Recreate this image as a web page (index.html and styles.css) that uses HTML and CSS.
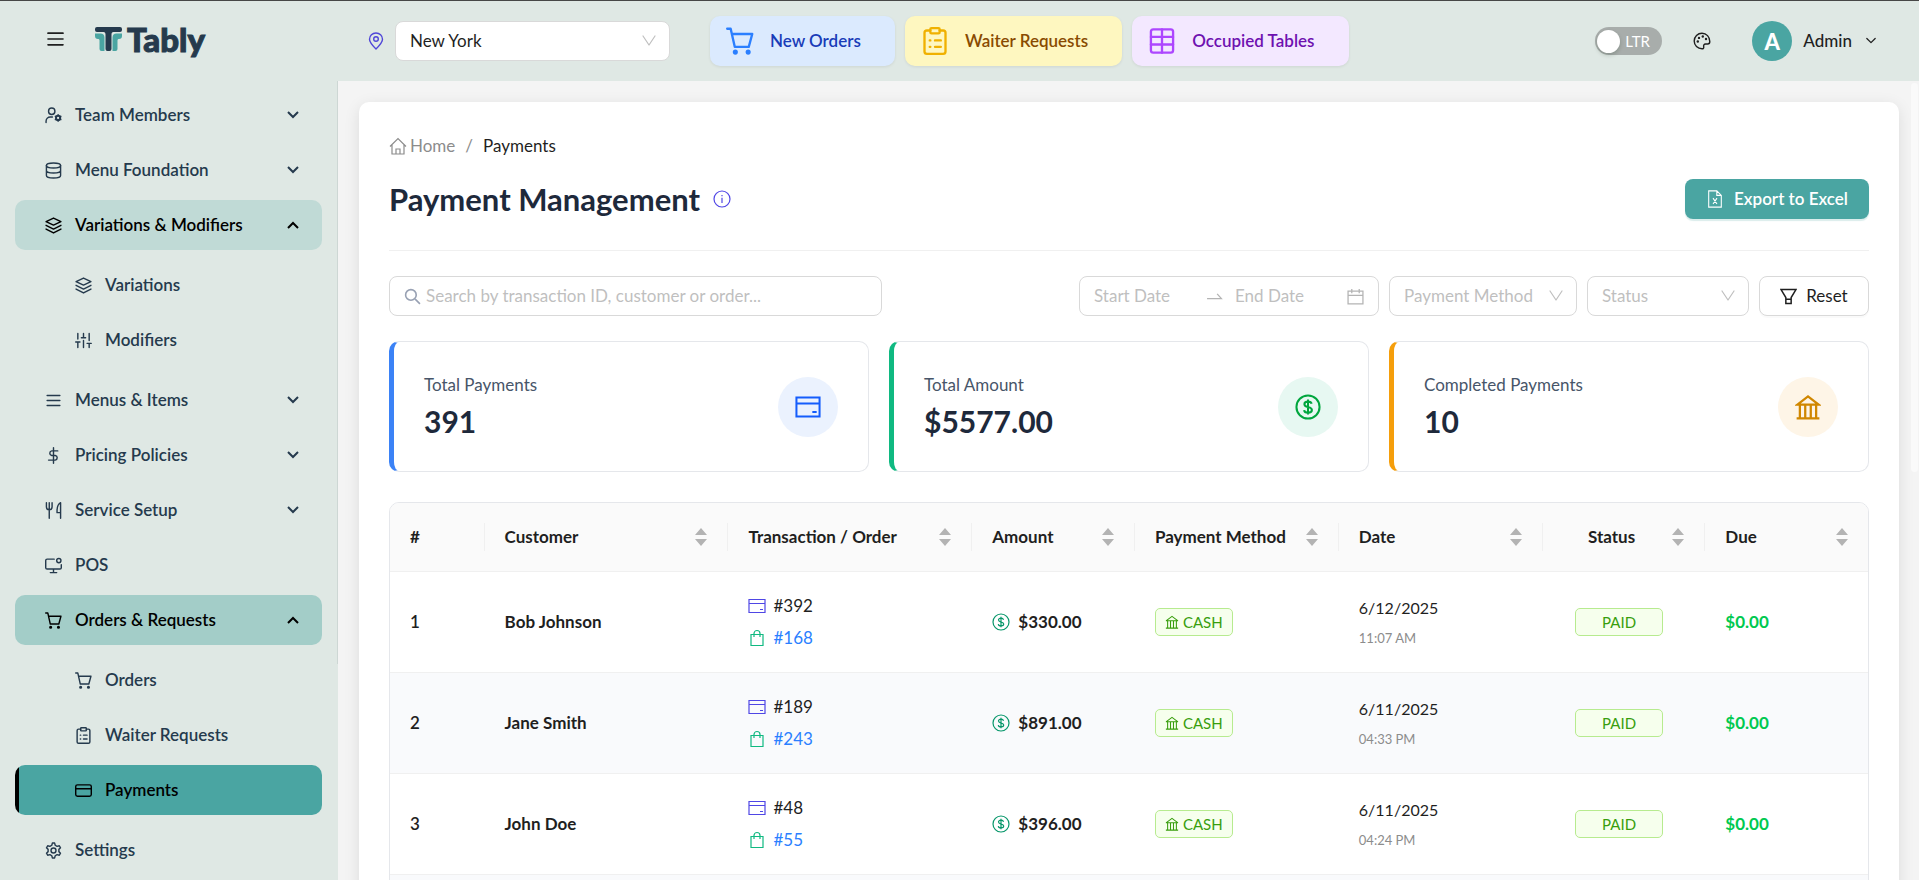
FILE: index.html
```html
<!DOCTYPE html>
<html lang="en" dir="ltr">
<head>
<meta charset="utf-8">
<meta name="viewport" content="width=device-width, initial-scale=1">
<title>Payment Management - Tably</title>
<link rel="stylesheet" href="styles.css">
</head>
<body>
<svg class="sprite" aria-hidden="true">
  <symbol id="user-cog" viewBox="0 0 24 24"><circle cx="9.500" cy="6" r="4.500"/><path d="M1.500 22v-2a6 6 0 0 1 6-6h3"/><circle cx="18.500" cy="15.500" r="3" stroke-width="2.800"/><path d="M18.500 11v1.500M18.500 18.500V20M22.400 13.200l-1.300.8M15.900 17l-1.300.8M14.600 13.200l1.300.8M21.100 17l1.300.8"/></symbol>
  <symbol id="database" viewBox="0 0 24 24"><ellipse cx="12" cy="5" rx="10" ry="3.500"/><path d="M2 5v14c0 2 4 3.500 10 3.500s10-1.500 10-3.500V5M2 12c0 2 4 3.500 10 3.500s10-1.500 10-3.500"/></symbol>
  <symbol id="layers" viewBox="0 0 24 24"><path d="M12 1.500L1.500 6.500 12 11.500l10.500-5zM1.500 11.800L12 17l10.500-5.200M1.500 17L12 22.500 22.500 17"/></symbol>
  <symbol id="sliders" viewBox="0 0 24 24"><path d="M4 22v-8M4 10V2M12 22V12M12 8V2M20 22v-6M20 12V2M1 14h6M9 8h6M17 16h6"/></symbol>
  <symbol id="menu" viewBox="0 0 24 24"><path d="M3 5h18M3 12h18M3 19h18"/></symbol>
  <symbol id="dollar" viewBox="0 0 24 24"><path d="M12 1v22M18 5.500H9.500a3.300 3.300 0 0 0 0 6.500h5a3.300 3.300 0 0 1 0 6.500H5"/></symbol>
  <symbol id="utensils" viewBox="0 0 24 24"><path d="M2 1v6a4 4 0 0 0 8 0V1M6 1v22M22 23V1c-4 2-5 6-5 12v2h5"/></symbol>
  <symbol id="monitor" viewBox="0 0 24 24"><path d="M13 3H3a2 2 0 0 0-2 2v10a2 2 0 0 0 2 2h18a2 2 0 0 0 2-2v-4M7.500 22h9M12 17v5"/><circle cx="19.500" cy="5" r="3"/></symbol>
  <symbol id="cart" viewBox="0 0 24 24"><path d="M1 1.500h3L7.500 17H19.500L22.500 6H5"/><circle cx="8" cy="21.500" r="1.200" fill="currentColor"/><circle cx="19" cy="21.500" r="1.200" fill="currentColor"/></symbol>
  <symbol id="clipboard" viewBox="0 0 24 24"><path d="M8 3H5a2 2 0 0 0-2 2v16a2 2 0 0 0 2 2h14a2 2 0 0 0 2-2V5a2 2 0 0 0-2-2h-3"/><rect x="8" y="1" width="8" height="4.500" rx="1"/><path d="M12 11.500h5M12 17h5M7.500 11.500h.5M7.500 17h.5"/></symbol>
  <symbol id="card-round" viewBox="0 0 24 24"><rect x="1" y="4" width="22" height="16" rx="2.500"/><path d="M1 9.500h22"/></symbol>
  <symbol id="gear" viewBox="0 0 24 24"><circle cx="12" cy="12" r="3.500"/><path d="M9.600 4.600L10.400 1.500h3.200l.8 3.100 2.700 1.600 3.100-.9 1.700 2.900-2.300 2.200v3.200l2.300 2.200-1.700 2.900-3.100-.9-2.700 1.600-.8 3.100h-3.200l-.8-3.100-2.700-1.600-3.100.9-1.700-2.900 2.300-2.200v-3.200L2.100 8.200l1.700-2.900 3.100.9z"/></symbol>
  <symbol id="grid" viewBox="0 0 24 24"><rect x="2.500" y="2" width="19" height="20" rx="2"/><path d="M12 2v20M2.500 8.500h19M2.500 15h19"/></symbol>
  <symbol id="down" viewBox="0 0 12 12"><path d="M1 3l5 5 5-5"/></symbol>
  <symbol id="up" viewBox="0 0 12 12"><path d="M1 9l5-5 5 5"/></symbol>
  <symbol id="vee" viewBox="0 0 14 14"><path d="M1 2l6 9 6-9"/></symbol>
  <symbol id="pin" viewBox="0 0 16 18"><path d="M8 17C4 13 1.500 10 1.500 7.200a6.500 6.200 0 0 1 13 0C14.500 10 12 13 8 17z"/><circle cx="8" cy="7" r="2.300"/></symbol>
  <symbol id="palette" viewBox="0 0 18 18"><path d="M9 1.200a7.800 7.800 0 1 0 0 15.600c1.400 0 2-.9 1.700-2-.4-1.500.3-2.800 1.900-2.800h2.100c1.300 0 2.100-1 2.100-2.500C16.800 4.900 13.400 1.200 9 1.200z"/><g fill="currentColor" stroke="none"><circle cx="4.800" cy="9.500" r="1.200"/><circle cx="6" cy="5.900" r="1.200"/><circle cx="9.800" cy="4.500" r="1.200"/><circle cx="13" cy="7" r="1.200"/></g></symbol>
  <symbol id="home" viewBox="0 0 18 18"><path d="M1 9.500L9 1.500l8 8M3 8v9h12V8M7 17v-5h4v5"/></symbol>
  <symbol id="info" viewBox="0 0 18 18"><circle cx="9" cy="9" r="8"/><path d="M9 7.800v5.200M9 5v1.200"/></symbol>
  <symbol id="excel" viewBox="0 0 16 20"><path d="M10 1H1v18h14V6zM10 1v5h5M5.800 9l4.400 6.500M10.200 9l-4.400 6.500"/></symbol>
  <symbol id="search" viewBox="0 0 16 16"><circle cx="6.500" cy="6.500" r="5"/><path d="M10.500 10.500L15 15"/></symbol>
  <symbol id="arrow" viewBox="0 0 16 16"><path d="M1 10h13.500L10.500 5.500"/></symbol>
  <symbol id="calendar" viewBox="0 0 16 16"><path d="M1 3h14v12H1zM1 7h14M4.500 1v4M11.500 1v4"/></symbol>
  <symbol id="filter" viewBox="0 0 16 16"><path d="M1 1.500h14L10.500 9v5.500h-5V9zM5.500 10.500h5"/></symbol>
  <symbol id="card" viewBox="0 0 18 16"><path d="M1 1.500h16v13H1zM1 5.500h16M12 11.500h3"/></symbol>
  <symbol id="bag" viewBox="0 0 16 18"><path d="M2 5.500h12v11H2zM5 8V4.500a3 3 0 0 1 6 0V8"/></symbol>
  <symbol id="coin" viewBox="0 0 18 18"><circle cx="9" cy="9" r="8"/><path d="M9 3.800v10.400M11.500 6.800c-.2-1-1.100-1.600-2.500-1.600s-2.500.7-2.500 1.900c0 2.800 5.200 1.200 5.200 3.900 0 1.100-1 1.900-2.700 1.900s-2.600-.8-2.700-1.800"/></symbol>
  <symbol id="bank" viewBox="0 0 16 16"><path d="M1 15h14M1.500 6.500L8 1.500l6.500 5zM3 6.500V15M6.300 6.500V15M9.700 6.500V15M13 6.500V15"/></symbol>
  <symbol id="sorter" viewBox="0 0 12 18"><path d="M6 0l6 7H0zM0 11h12l-6 7z" fill="currentColor" stroke="none"/></symbol>
</svg>

<header class="topbar">
  <div class="brand">
    <button class="plain" type="button" aria-label="Toggle menu"><svg class="icon burger"><use href="#menu"/></svg></button>
    <a class="logo" href="#">
      <svg class="logo-mark" viewBox="0 0 27 25" aria-hidden="true"><path fill="#253a4d" d="M2 0h23a2 2 0 0 1 2 2v1a2 2 0 0 1-2 2h-6.500c-1.500 0-2 1-2 2.500V22a2 2 0 0 1-2 2h-2a2 2 0 0 1-2-2V7.500c0-1.500-.5-2.500-2-2.500H2a2 2 0 0 1-2-2V2a2 2 0 0 1 2-2z"/><path fill="#4aa5a2" d="M0 6.500h5.500c2.500 0 4 1.500 4 4V24H6.500a2 2 0 0 1-2-2V13.500c0-1-.5-1.500-1.500-1.500A3 3 0 0 1 0 9zM27 6.500h-5.500c-2.500 0-4 1.500-4 4V24h3a2 2 0 0 0 2-2V13.500c0-1 .5-1.500 1.500-1.500a3 3 0 0 0 3-3z"/></svg>
      <span>Tably</span>
    </a>
  </div>
  <div class="branch">
    <svg class="icon pin"><use href="#pin"/></svg>
    <div class="select branch-select">
      <select aria-label="Branch"><option>New York</option></select>
      <svg class="icon vee"><use href="#vee"/></svg>
    </div>
  </div>
  <nav class="quick" aria-label="Quick links">
    <a class="chip blue" href="#"><svg class="icon big"><use href="#cart"/></svg>New Orders</a>
    <a class="chip yellow" href="#"><svg class="icon big"><use href="#clipboard"/></svg>Waiter Requests</a>
    <a class="chip purple" href="#"><svg class="icon big"><use href="#grid"/></svg>Occupied Tables</a>
  </nav>
  <div class="account">
    <button class="switch" type="button" role="switch" aria-checked="false"><span class="knob"></span>LTR</button>
    <button class="plain" type="button" aria-label="Theme"><svg class="icon palette"><use href="#palette"/></svg></button>
    <button class="plain user" type="button"><span class="avatar">A</span>Admin<svg class="icon tiny"><use href="#down"/></svg></button>
  </div>
</header>

<div class="shell">
  <nav class="sidebar" aria-label="Main">
    <a class="item" href="#"><svg class="icon"><use href="#user-cog"/></svg><span>Team Members</span><svg class="icon caret"><use href="#down"/></svg></a>
    <a class="item" href="#"><svg class="icon"><use href="#database"/></svg><span>Menu Foundation</span><svg class="icon caret"><use href="#down"/></svg></a>
    <a class="item open" href="#"><svg class="icon"><use href="#layers"/></svg><span>Variations &amp; Modifiers</span><svg class="icon caret"><use href="#up"/></svg></a>
    <div class="sub">
      <a class="item" href="#"><svg class="icon"><use href="#layers"/></svg><span>Variations</span></a>
      <a class="item" href="#"><svg class="icon"><use href="#sliders"/></svg><span>Modifiers</span></a>
    </div>
    <a class="item" href="#"><svg class="icon"><use href="#menu"/></svg><span>Menus &amp; Items</span><svg class="icon caret"><use href="#down"/></svg></a>
    <a class="item" href="#"><svg class="icon"><use href="#dollar"/></svg><span>Pricing Policies</span><svg class="icon caret"><use href="#down"/></svg></a>
    <a class="item" href="#"><svg class="icon"><use href="#utensils"/></svg><span>Service Setup</span><svg class="icon caret"><use href="#down"/></svg></a>
    <a class="item" href="#"><svg class="icon"><use href="#monitor"/></svg><span>POS</span></a>
    <a class="item open current" href="#"><svg class="icon"><use href="#cart"/></svg><span>Orders &amp; Requests</span><svg class="icon caret"><use href="#up"/></svg></a>
    <div class="sub">
      <a class="item" href="#"><svg class="icon"><use href="#cart"/></svg><span>Orders</span></a>
      <a class="item" href="#"><svg class="icon"><use href="#clipboard"/></svg><span>Waiter Requests</span></a>
      <a class="item selected" href="#" aria-current="page"><svg class="icon"><use href="#card-round"/></svg><span>Payments</span></a>
    </div>
    <a class="item" href="#"><svg class="icon"><use href="#gear"/></svg><span>Settings</span></a>
    <span class="side-thumb"></span>
  </nav>

  <main class="page">
    <span class="page-thumb"></span>
    <div class="panel">
      <nav class="crumbs" aria-label="Breadcrumb">
        <a href="#"><svg class="icon med"><use href="#home"/></svg>Home</a><span>/</span><span class="here">Payments</span>
      </nav>
      <div class="heading">
        <h1>Payment Management</h1>
        <svg class="icon med info"><use href="#info"/></svg>
        <button class="export" type="button"><svg class="icon med"><use href="#excel"/></svg>Export to Excel</button>
      </div>

      <form class="filters">
        <label class="field search"><svg class="icon"><use href="#search"/></svg><input type="text" aria-label="Search" placeholder="Search by transaction ID, customer or order..."></label>
        <div class="field range">
          <input type="text" aria-label="Start date" placeholder="Start Date">
          <svg class="icon"><use href="#arrow"/></svg>
          <input type="text" aria-label="End date" placeholder="End Date">
          <svg class="icon"><use href="#calendar"/></svg>
        </div>
        <div class="select method"><select aria-label="Payment method"><option>Payment Method</option></select><svg class="icon vee"><use href="#vee"/></svg></div>
        <div class="select status"><select aria-label="Status"><option>Status</option></select><svg class="icon vee"><use href="#vee"/></svg></div>
        <button class="reset" type="reset"><svg class="icon"><use href="#filter"/></svg>Reset</button>
      </form>

      <section class="stats">
        <article class="stat s-blue"><div><p>Total Payments</p><strong>391</strong></div><span class="disc"><svg class="icon mid"><use href="#card"/></svg></span></article>
        <article class="stat s-green"><div><p>Total Amount</p><strong>$5577.00</strong></div><span class="disc"><svg class="icon mid"><use href="#coin"/></svg></span></article>
        <article class="stat s-amber"><div><p>Completed Payments</p><strong>10</strong></div><span class="disc"><svg class="icon mid"><use href="#bank"/></svg></span></article>
      </section>

      <div class="table-box">
        <table>
          <colgroup><col class="c-num"><col class="c-wide"><col class="c-wide"><col class="c-slim"><col class="c-mid"><col class="c-mid"><col class="c-slim"><col class="c-slim"></colgroup>
          <thead>
            <tr>
              <th scope="col"><div class="th"><span>#</span></div></th>
              <th scope="col"><div class="th"><span>Customer</span><svg class="icon sorter"><use href="#sorter"/></svg></div></th>
              <th scope="col"><div class="th"><span>Transaction / Order</span><svg class="icon sorter"><use href="#sorter"/></svg></div></th>
              <th scope="col"><div class="th"><span>Amount</span><svg class="icon sorter"><use href="#sorter"/></svg></div></th>
              <th scope="col"><div class="th"><span>Payment Method</span><svg class="icon sorter"><use href="#sorter"/></svg></div></th>
              <th scope="col"><div class="th"><span>Date</span><svg class="icon sorter"><use href="#sorter"/></svg></div></th>
              <th scope="col"><div class="th mid-text"><span>Status</span><svg class="icon sorter"><use href="#sorter"/></svg></div></th>
              <th scope="col"><div class="th"><span>Due</span><svg class="icon sorter"><use href="#sorter"/></svg></div></th>
            </tr>
          </thead>
          <tbody>
            <tr>
              <td class="num">1</td><td class="name">Bob Johnson</td>
              <td><div class="ref"><svg class="icon med indigo"><use href="#card"/></svg>#392</div><div class="ref"><svg class="icon med emerald"><use href="#bag"/></svg><a href="#">#168</a></div></td>
              <td><div class="amount"><svg class="icon med teal"><use href="#coin"/></svg>$330.00</div></td>
              <td><span class="tag"><svg class="icon small"><use href="#bank"/></svg>CASH</span></td>
              <td><div class="day">6/12/2025</div><div class="time">11:07 AM</div></td>
              <td class="center"><span class="tag paid">PAID</span></td><td class="due">$0.00</td>
            </tr>
            <tr>
              <td class="num">2</td><td class="name">Jane Smith</td>
              <td><div class="ref"><svg class="icon med indigo"><use href="#card"/></svg>#189</div><div class="ref"><svg class="icon med emerald"><use href="#bag"/></svg><a href="#">#243</a></div></td>
              <td><div class="amount"><svg class="icon med teal"><use href="#coin"/></svg>$891.00</div></td>
              <td><span class="tag"><svg class="icon small"><use href="#bank"/></svg>CASH</span></td>
              <td><div class="day">6/11/2025</div><div class="time">04:33 PM</div></td>
              <td class="center"><span class="tag paid">PAID</span></td><td class="due">$0.00</td>
            </tr>
            <tr>
              <td class="num">3</td><td class="name">John Doe</td>
              <td><div class="ref"><svg class="icon med indigo"><use href="#card"/></svg>#48</div><div class="ref"><svg class="icon med emerald"><use href="#bag"/></svg><a href="#">#55</a></div></td>
              <td><div class="amount"><svg class="icon med teal"><use href="#coin"/></svg>$396.00</div></td>
              <td><span class="tag"><svg class="icon small"><use href="#bank"/></svg>CASH</span></td>
              <td><div class="day">6/11/2025</div><div class="time">04:24 PM</div></td>
              <td class="center"><span class="tag paid">PAID</span></td><td class="due">$0.00</td>
            </tr>
            <tr class="next"><td colspan="8"></td></tr>
          </tbody>
        </table>
      </div>
    </div>
  </main>
</div>
</body>
</html>
```
FILE: styles.css
```css
:root {
  --mist: #dfe8e4;
  --teal: #4aa5a2;
  --ink: #253a4d;
  --line: #d9d9d9;
  --faint: #bfbfbf;
}

* { box-sizing: border-box; }

body {
  margin: 0;
  height: 100vh;
  display: flex;
  flex-direction: column;
  overflow: hidden;
  font: 17px/24px Lato, "Open Sans", sans-serif;
  color: #1f1f1f;
  background: #f4f4f4;
}

a { color: inherit; text-decoration: none; }
button, input, select { font: inherit; color: inherit; }
.sprite { position: absolute; width: 0; height: 0; }

.icon {
  width: 17px;
  height: 17px;
  flex: none;
  fill: none;
  stroke: currentColor;
  stroke-width: 2;
  stroke-linecap: round;
  stroke-linejoin: round;
}
.icon.med { width: 18px; height: 18px; stroke-width: 1.2; stroke-linecap: butt; stroke-linejoin: miter; }
.icon.big { width: 30px; height: 28px; }
.icon.mid { width: 26px; height: 26px; stroke-width: 1.4; stroke-linecap: butt; stroke-linejoin: miter; }
.icon.small { width: 14px; height: 14px; stroke-width: 1.2; stroke-linecap: butt; }
.icon.tiny { width: 10px; height: 10px; stroke-width: 1.5; }
.plain { border: 0; padding: 0; background: none; display: flex; align-items: center; cursor: pointer; }

/* Top bar */
.topbar {
  height: 81px;
  flex: none;
  display: flex;
  align-items: center;
  border-top: 1px solid #474747;
  background: var(--mist);
}
.brand { width: 338px; flex: none; display: flex; align-items: center; gap: 29px; padding: 0 0 4px 45px; }
.icon.burger { width: 21px; height: 20px; }
.logo { display: flex; align-items: center; gap: 5px; color: var(--ink); font-size: 33px; line-height: 40px; font-weight: 900; -webkit-text-stroke: 1px var(--ink); }
.logo-mark { width: 27px; height: 25px; }
.branch { display: flex; align-items: center; gap: 11px; margin-left: 30px; }
.icon.pin { width: 16px; height: 18px; stroke-width: 1.4; color: #5046d8; }
.select { display: flex; align-items: center; position: relative; }
.select select {
  appearance: none;
  width: 100%;
  height: 40px;
  padding: 0 34px 0 14px;
  border: 1px solid var(--line);
  border-radius: 8px;
  background: #fff;
}
.icon.vee { position: absolute; right: 14px; width: 14px; height: 14px; stroke-width: 1.2; color: var(--faint); pointer-events: none; }
.branch-select { width: 275px; }
.quick { display: flex; gap: 10px; margin-left: 40px; }
.chip {
  height: 50px;
  display: flex;
  align-items: center;
  gap: 15px;
  padding: 0 34px 0 15px;
  border-radius: 10px;
  font-weight: 600;
  box-shadow: 0 1px 3px rgba(0, 0, 0, .08);
  white-space: nowrap;
}
.blue { background: #dbeafe; color: #193cb8; }
.blue .icon { color: #2b7fff; }
.yellow { background: #fef7c0; color: #894b00; }
.yellow .icon { color: #f0b100; }
.purple { background: #f3e8ff; color: #6e11b0; }
.purple .icon { color: #ad46ff; }
.account { margin-left: auto; padding-right: 43px; display: flex; align-items: center; }
.switch {
  width: 67px;
  height: 28px;
  display: flex;
  align-items: center;
  gap: 5px;
  padding: 0 2px;
  border: 0;
  border-radius: 14px;
  background: #a8adab;
  color: #fff;
  font-size: 15px;
}
.knob { width: 23px; height: 23px; flex: none; border-radius: 50%; background: #fff; box-shadow: 0 2px 4px rgba(0, 35, 11, .2); }
.icon.palette { width: 18px; height: 18px; margin: 0 41px 0 31px; stroke-width: 1.4; }
.user { gap: 11px; font-weight: 500; }
.user .tiny { margin-left: 3px; }
.avatar { width: 40px; height: 40px; border-radius: 50%; background: var(--teal); color: #fff; font-size: 22px; line-height: 42px; font-weight: 900; text-align: center; }

/* Sidebar */
.shell { flex: 1; min-height: 0; display: flex; }
.sidebar {
  position: relative;
  width: 338px;
  flex: none;
  display: flex;
  flex-direction: column;
  gap: 5px;
  padding: 9px 16px 0 15px;
  overflow: hidden;
  background: var(--mist);
  color: var(--ink);
}
.item {
  height: 50px;
  flex: none;
  display: flex;
  align-items: center;
  gap: 13px;
  padding: 0 23px 0 30px;
  border-radius: 10px;
  font-weight: 600;
}
.item span { flex: 1; }
.item .caret { width: 12px; height: 12px; stroke-linecap: butt; stroke-linejoin: miter; }
.sub { display: flex; flex-direction: column; gap: 5px; margin: 5px 0; }
.sub .item { padding-left: 60px; }
.item.open { background: #c0dad6; color: #000; }
.item.current { background: #a3cdc8; }
.item.selected { background: linear-gradient(to right, #000 4px, var(--teal) 4px); color: #000; }
.side-thumb { position: absolute; top: 0; right: 0; width: 1px; height: 583px; background: #cdd7d4; }

/* Page */
.page { position: relative; flex: 1; min-width: 0; overflow: hidden; padding: 21px 20px 0 21px; }
.page-thumb { position: absolute; top: 2px; right: 1px; width: 7px; height: 389px; border-radius: 4px; background: #fafafa; }
.panel {
  min-height: 900px;
  padding: 32px 30px;
  border-radius: 10px;
  background: #fff;
  box-shadow: 0 4px 16px rgba(0, 0, 0, .1);
}
.crumbs { display: flex; gap: 10px; color: #8c8c8c; }
.crumbs a { display: flex; align-items: center; gap: 3px; }
.crumbs .here { color: #1f1f1f; }
.heading { display: flex; align-items: center; gap: 13px; padding: 21px 0 31px; border-bottom: 1px solid #f0f0f0; }
h1 { margin: 0; font-size: 31px; line-height: 40px; font-weight: 700; color: #1e293b; }
.info { color: #5046e5; }
.export, .reset {
  height: 40px;
  display: flex;
  align-items: center;
  justify-content: center;
  border-radius: 8px;
  cursor: pointer;
}
.export { width: 184px; gap: 10px; margin-left: auto; border: 0; background: var(--teal); color: #fff; font-weight: 600; box-shadow: 0 2px 1px rgba(74, 165, 162, .2); }

.filters { display: flex; align-items: center; gap: 10px; margin-top: 25px; }
.field { height: 40px; display: flex; align-items: center; border: 1px solid var(--line); border-radius: 8px; background: #fff; color: #1f1f1f; }
.field input { width: 100%; min-width: 0; border: 0; outline: 0; padding: 0; background: none; }
.field input::placeholder { color: var(--faint); opacity: 1; }
.field .icon { stroke-width: 1.2; stroke-linecap: butt; stroke-linejoin: miter; color: #b4b4b4; }
.search { flex: 0 1 493px; margin-right: auto; gap: 5px; padding: 0 14px; }
.field.search .icon { color: #98a1b3; stroke-width: 1.5; }
.range { width: 300px; gap: 12px; padding: 0 14px; }
.filters .select select { color: var(--faint); }
.method { width: 188px; }
.status { width: 162px; }
.reset { width: 110px; gap: 9px; border: 1px solid var(--line); background: #fff; box-shadow: 0 2px 0 rgba(0, 0, 0, .02); }
.reset .icon { stroke-width: 1.4; stroke-linecap: butt; stroke-linejoin: miter; }

.stats { display: grid; grid-template-columns: repeat(3, 1fr); gap: 20px; margin-top: 25px; }
.stat {
  height: 131px;
  display: flex;
  align-items: center;
  justify-content: space-between;
  padding: 0 30px;
  border: 1px solid #e5e7eb;
  border-left-width: 5px;
  border-radius: 10px;
}
.stat p { margin: 0 0 4px; color: #475569; }
.stat strong { display: block; font-size: 30px; line-height: 40px; color: #1e293b; }
.disc { width: 60px; height: 60px; border-radius: 50%; display: grid; place-items: center; }
.s-blue { border-left-color: #3b82f6; }
.s-blue .disc { background: #ebf2fe; color: #155dfc; }
.s-green { border-left-color: #10b981; }
.s-green .disc { background: #e7f8f2; color: #00a63e; }
.s-amber { border-left-color: #f59e0b; }
.s-amber .disc { background: #fef5e7; color: #d08700; }

/* Table */
.table-box { margin-top: 30px; border: 1px solid #e5e7eb; border-radius: 10px; overflow: hidden; }
table { width: 100%; table-layout: fixed; border-collapse: separate; border-spacing: 0; }
.c-num { width: 6.4%; }
.c-wide { width: 16.5%; }
.c-mid { width: 13.8%; }
.c-slim { width: 11%; }
th { height: 69px; padding: 0; background: #fafafa; border-bottom: 1px solid #f0f0f0; text-align: left; font-weight: 700; }
.th { height: 28px; display: flex; align-items: center; padding: 0 20px; border-right: 1px solid #f0f0f0; white-space: nowrap; }
.th span { flex: 1; }
th:last-child .th { border-right: 0; }
.mid-text { gap: 12px; text-align: center; }
.icon.sorter { width: 12px; height: 18px; color: #b3b3b3; }
td { height: 101px; padding: 0 20px; border-bottom: 1px solid #f0f0f0; }
tbody tr:nth-child(even) td { background: #f9fafc; }
.num { font-weight: 600; }
.name { font-weight: 700; }
.ref { display: flex; align-items: center; gap: 7px; height: 32px; }
.ref a { color: #2b7fff; }
.indigo { color: #4f46e5; }
.emerald { color: #10b981; }
.teal { color: #059669; }
.amount { display: flex; align-items: center; gap: 8px; font-weight: 700; }
.tag {
  height: 28px;
  display: inline-flex;
  align-items: center;
  gap: 4px;
  padding: 0 9px;
  border: 1px solid #b7eb8f;
  border-radius: 5px;
  background: #f6ffed;
  color: #389e0d;
  font-size: 15px;
  vertical-align: middle;
}
.paid { width: 88px; justify-content: center; }
.center { text-align: center; padding-right: 30px; }
.day { font-size: 16px; }
.time { margin-top: 8px; font-size: 13px; line-height: 20px; color: #8c8c8c; }
.due { color: #00c950; font-weight: 700; }
```
